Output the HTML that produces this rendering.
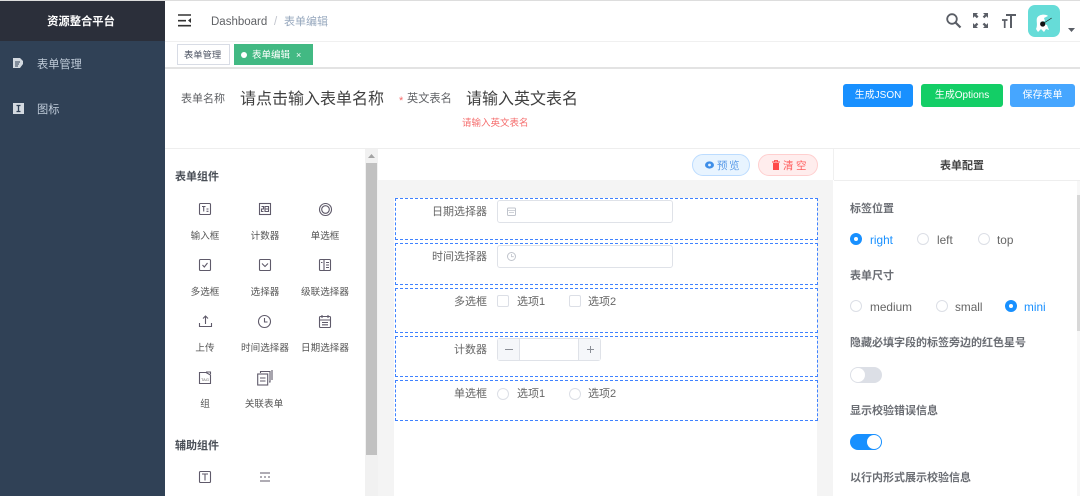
<!DOCTYPE html>
<html lang="zh"><head><meta charset="utf-8"><title>表单编辑</title>
<style>
*{box-sizing:border-box;margin:0;padding:0}
html,body{width:1080px;height:496px;overflow:hidden;background:#fff}
body{position:relative;font-family:"Liberation Sans","Noto Sans CJK SC",sans-serif;color:#606266;filter:blur(.3px)}
.b{position:absolute}
.t{position:absolute;white-space:nowrap;line-height:1.2;margin-top:1px}
.c{transform:translateX(-50%)}
.r{transform:translateX(-100%)}
svg{position:absolute;overflow:visible}
.dash{position:absolute;left:395px;width:423px;border:1px dashed #3f82ff}
.cb{position:absolute;width:12px;height:12px;border:1px solid #dcdfe6;border-radius:2px;background:#fff}
.rd{position:absolute;width:12px;height:12px;border:1px solid #dcdfe6;border-radius:50%;background:#fff}
.rdon{position:absolute;width:12px;height:12px;border-radius:50%;background:#1890ff}
.rdon:after{content:"";position:absolute;left:4px;top:4px;width:4px;height:4px;border-radius:50%;background:#fff}
.btn{position:absolute;top:84px;height:23px;border-radius:3px;color:#fff;font-size:10px;line-height:24px;text-align:center}
.lab{font-size:9.6px;color:#555}
.h{font-size:11px;font-weight:700;color:#4a4f57}
.fl{font-size:11px;color:#666}
.opt{font-size:11px;color:#666}
.cfg{font-size:11px;font-weight:700;color:#6b6e74}
.lat{font-size:11.8px}
.ic{fill:none;stroke:#5f5a6a;stroke-width:1.1}
</style></head><body>

<div class="b" style="left:0;top:0;width:1080px;height:1px;background:#ddd"></div>

<!-- sidebar -->
<div class="b" style="left:0;top:1px;width:165px;height:495px;background:#304156"></div>
<div class="b" style="left:0;top:1px;width:165px;height:40px;background:#2b2f3a"></div>
<div class="t c" style="left:81px;top:15px;font-size:11.3px;font-weight:700;color:#fff">资源整合平台</div>
<svg style="left:13px;top:58px" width="11" height="11" viewBox="0 0 11 11"><path d="M0 0H7L10 3V6L7 10H0Z" fill="#d3d9e0"/><path d="M2 4H7M2 6H6M2 8H5" stroke="#304156" stroke-width="1"/></svg>
<div class="t" style="left:37px;top:58px;font-size:11.2px;color:#bfcbd9">表单管理</div>
<svg style="left:13px;top:103px" width="11" height="11" viewBox="0 0 11 11"><rect width="11" height="11" fill="#d3d9e0"/><path d="M3.5 2.5H7.5M5.5 2.5V8.5M3.5 8.5H7.5" stroke="#304156" stroke-width="1.3" fill="none"/></svg>
<div class="t" style="left:37px;top:103px;font-size:11.2px;color:#bfcbd9">图标</div>

<!-- navbar -->
<div class="b" style="left:165px;top:41px;width:915px;height:1px;background:#f0f0f0"></div>
<svg style="left:178px;top:14px" width="14" height="13" viewBox="0 0 14 13"><path d="M0 1H13M0 6.7H8M0 11.7H13" stroke="#333" stroke-width="1.6" fill="none"/><path d="M13 4L10 6.5L13 9Z" fill="#333"/></svg>
<div class="t" style="left:211px;top:15px;font-size:11.5px;color:#606266">Dashboard</div>
<div class="t" style="left:274px;top:15px;font-size:11.5px;color:#c0c4cc">/</div>
<div class="t" style="left:284px;top:15px;font-size:11px;color:#97a8be">表单编辑</div>
<svg style="left:946px;top:13px" width="15" height="15" viewBox="0 0 15 15"><circle cx="6" cy="6" r="4.8" fill="none" stroke="#5a5e66" stroke-width="1.8"/><path d="M9.5 9.5L14.5 14.5" stroke="#5a5e66" stroke-width="2.2"/></svg>
<svg style="left:973px;top:13px" width="15" height="15" viewBox="0 0 15 15" fill="#5a5e66"><path d="M0 0H5L3.5 1.5L5.5 3.5L3.8 5.2L1.7 3.2L0 5ZM15 0V5L13.4 3.3L11.3 5.3L9.7 3.6L11.7 1.6L10 0ZM0 15V10L1.6 11.7L3.7 9.7L5.3 11.4L3.3 13.4L5 15ZM15 15H10L11.6 13.4L9.6 11.3L11.3 9.7L13.4 11.7L15 10Z"/></svg>
<svg style="left:1001px;top:13px" width="15" height="15" viewBox="0 0 15 15" fill="none" stroke="#5a5e66"><path d="M5 2H15M10 2V15" stroke-width="2"/><path d="M1 7H6.5M3.7 7V15" stroke-width="1.7"/></svg>
<div class="b" style="left:1028px;top:5px;width:32px;height:32px;border-radius:7px;background:#66dcd8"></div>
<svg style="left:1028px;top:5px" width="32" height="32" viewBox="0 0 32 32"><path d="M9 13C11 9 18 9 20 11L16 13L17 16L12 17L19 20L21 25L18 24L16 27L13 24L10 27L8 24C10 20 8 16 9 13Z" fill="#fff"/><circle cx="14.7" cy="19" r="2.6" fill="#111"/><path d="M16 18L23.7 13" stroke="#222" stroke-width=".7"/></svg>
<svg style="left:1068px;top:28px" width="7" height="4" viewBox="0 0 7 4"><path d="M0 0H7L3.5 4Z" fill="#5a5e66"/></svg>

<!-- tags -->
<div class="b" style="left:165px;top:67px;width:915px;height:2px;background:#e3e3e3"></div>
<div class="b" style="left:177px;top:44px;width:53px;height:21px;border:1px solid #d8dce5;background:#fff"></div>
<div class="t" style="left:184px;top:49px;font-size:9.3px;color:#495060">表单管理</div>
<div class="b" style="left:234px;top:44px;width:79px;height:21px;background:#42b983"></div>
<div class="b" style="left:241px;top:52px;width:6px;height:6px;border-radius:50%;background:#fff"></div>
<div class="t" style="left:252px;top:49px;font-size:9.5px;color:#fff">表单编辑</div>
<div class="t" style="left:296px;top:49px;font-size:9px;color:#fff">×</div>

<!-- form header -->
<div class="t" style="left:181px;top:92px;font-size:11px;color:#606266">表单名称</div>
<div class="t" style="left:240px;top:89px;font-size:16px;color:#3f3f3f">请点击输入表单名称</div>
<div class="t" style="left:399px;top:94px;font-size:11px;color:#f56c6c">*</div>
<div class="t" style="left:407px;top:92px;font-size:11.2px;color:#606266">英文表名</div>
<div class="t" style="left:466px;top:89px;font-size:16px;color:#3f3f3f">请输入英文表名</div>
<div class="t" style="left:462px;top:117px;font-size:9.5px;color:#f56c6c">请输入英文表名</div>
<div class="btn" style="left:843px;width:70px;background:#1890ff">生成JSON</div>
<div class="btn" style="left:921px;width:82px;background:#13ce66">生成Options</div>
<div class="btn" style="left:1010px;width:65px;background:#46a6ff">保存表单</div>
<div class="b" style="left:165px;top:148px;width:915px;height:1px;background:#eee"></div>

<!-- left panel -->
<div class="b" style="left:365px;top:149px;width:13px;height:347px;background:#f1f1f1"></div>
<div class="b" style="left:366px;top:163px;width:11px;height:292px;background:#c1c1c1"></div>
<svg style="left:368px;top:154px" width="7" height="4" viewBox="0 0 7 4"><path d="M0 4H7L3.5 0Z" fill="#a3a3a3"/></svg>
<div class="t h" style="left:175px;top:170px">表单组件</div>

<svg style="left:199px;top:203px" width="12" height="12" viewBox="0 0 12 12"><rect x=".5" y=".5" width="11" height="11" rx="1" class="ic"/><path d="M3 3.5H6.5M4.7 3.5V8.5M7.5 6H9.5M7.5 8.3H9.5" class="ic" stroke-width=".9"/></svg>
<div class="t c lab" style="left:205px;top:230px">输入框</div>
<svg style="left:259px;top:203px" width="12" height="12" viewBox="0 0 12 12"><rect x=".5" y=".5" width="11" height="11" class="ic"/><path d="M2.5 3.5H4.5V6H2.5V8.5H4.5M6 3.5H9.5V8.5H6ZM6 6H9.5" class="ic" stroke="#6b5f3f" stroke-width=".9"/></svg>
<div class="t c lab" style="left:265px;top:230px">计数器</div>
<svg style="left:319px;top:203px" width="13" height="13" viewBox="0 0 13 13"><circle cx="6.5" cy="6.5" r="6" class="ic"/><circle cx="6.5" cy="6.5" r="3.8" class="ic"/></svg>
<div class="t c lab" style="left:325px;top:230px">单选框</div>

<svg style="left:199px;top:259px" width="12" height="12" viewBox="0 0 12 12"><rect x=".5" y=".5" width="11" height="11" rx="1" class="ic"/><path d="M3.5 6L5.3 8L8.5 4" class="ic"/></svg>
<div class="t c lab" style="left:205px;top:286px">多选框</div>
<svg style="left:259px;top:259px" width="12" height="12" viewBox="0 0 12 12"><rect x=".5" y=".5" width="11" height="11" rx="1" class="ic"/><path d="M3 4.5L6 7.5L9 4.5" class="ic"/></svg>
<div class="t c lab" style="left:265px;top:286px">选择器</div>
<svg style="left:319px;top:259px" width="12" height="12" viewBox="0 0 12 12"><rect x=".5" y=".5" width="11" height="11" rx="1" class="ic"/><path d="M5 .5V11.5M7 3.5H10M7 6H10M7 8.5H10M2 3.5H3.5" class="ic"/></svg>
<div class="t c lab" style="left:325px;top:286px">级联选择器</div>

<svg style="left:199px;top:315px" width="13" height="13" viewBox="0 0 13 13"><path d="M6.5 9V1M4 3.5L6.5 1L9 3.5M.5 8V11.5H12.5V8" class="ic"/></svg>
<div class="t c lab" style="left:205px;top:342px">上传</div>
<svg style="left:258px;top:315px" width="13" height="13" viewBox="0 0 13 13"><circle cx="6.5" cy="6.5" r="6" class="ic"/><path d="M6.5 3V7H9.5" class="ic"/></svg>
<div class="t c lab" style="left:265px;top:342px">时间选择器</div>
<svg style="left:319px;top:315px" width="12" height="13" viewBox="0 0 12 13"><rect x=".5" y="1.5" width="11" height="11" rx="1" class="ic"/><path d="M.5 5H11.5M3 0V3M9 0V3M3 7.5H9M3 9.8H9" class="ic" stroke-width=".9"/></svg>
<div class="t c lab" style="left:325px;top:342px">日期选择器</div>

<svg style="left:199px;top:371px" width="12" height="13" viewBox="0 0 12 13"><path d="M.5 1.5H7L11.5 4V12.5H.5Z" class="ic" stroke="#8d97a3"/><path d="M7 1H11.5V3" class="ic" stroke="#8d97a3"/></svg>
<div class="t" style="left:201px;top:377px;font-size:4px;color:#666">TAG</div>
<div class="t c lab" style="left:205px;top:398px">组</div>
<svg style="left:257px;top:370px" width="16" height="16" viewBox="0 0 16 16"><rect x=".7" y="4" width="10" height="11" class="ic" stroke="#333" stroke-width="1.3"/><path d="M3 8H8.5M3 11H8.5" class="ic" stroke="#333"/><path d="M3.5 3V1.5H13V12H12M15 0V10" class="ic" stroke="#333"/></svg>
<div class="t c lab" style="left:264px;top:398px">关联表单</div>

<div class="t h" style="left:175px;top:439px">辅助组件</div>
<svg style="left:199px;top:471px" width="12" height="12" viewBox="0 0 12 12"><rect x=".5" y=".5" width="11" height="11" rx="1" class="ic"/><path d="M3 3H9M6 3V9.5" class="ic" stroke="#333"/></svg>
<svg style="left:259px;top:471px" width="12" height="12" viewBox="0 0 12 12"><path d="M1 2H11M1 6H3M5 6H7M9 6H11M1 10H11" class="ic" stroke="#6a6a6a"/></svg>

<!-- center -->
<div class="b" style="left:378px;top:180px;width:455px;height:316px;background:#f4f4f4"></div>
<div class="b" style="left:394px;top:180px;width:423px;height:316px;background:#fff"></div>
<div class="b" style="left:394px;top:180px;width:423px;height:18px;background:#f4f4f4"></div>
<div class="b" style="left:692px;top:154px;width:58px;height:22px;border:1px solid #bcdcff;border-radius:11px;background:#e8f4ff"></div>
<svg style="left:705px;top:161px" width="9" height="8" viewBox="0 0 9 8"><ellipse cx="4.5" cy="4" rx="4.5" ry="3.6" fill="#3e8ee8"/><circle cx="4.5" cy="4" r="1.4" fill="#e8f4ff"/></svg>
<div class="t" style="left:717px;top:159px;font-size:10.5px;letter-spacing:1.5px;color:#5b9be8">预览</div>
<div class="b" style="left:758px;top:154px;width:60px;height:22px;border:1px solid #ffcfcf;border-radius:11px;background:#ffeded"></div>
<svg style="left:772px;top:160px" width="8" height="10" viewBox="0 0 8 10"><path d="M0 2H8M2.5 2V.6H5.5V2" stroke="#ff4949" fill="none"/><path d="M1 3H7V10H1Z" fill="#ff4949"/></svg>
<div class="t" style="left:783px;top:159px;font-size:10.5px;letter-spacing:2.5px;color:#ff6060">清空</div>

<div class="dash" style="top:198px;height:42px"></div>
<div class="dash" style="top:243px;height:42px"></div>
<div class="dash" style="top:288px;height:45px"></div>
<div class="dash" style="top:336px;height:41px"></div>
<div class="dash" style="top:380px;height:41px"></div>

<div class="t r fl" style="left:487px;top:205px">日期选择器</div>
<div class="b" style="left:497px;top:200px;width:176px;height:23px;border:1px solid #dfe2e8;border-radius:3px;background:#fff"></div>
<svg style="left:507px;top:207px" width="9" height="9" viewBox="0 0 9 9"><rect x=".5" y="1" width="8" height="7.5" rx="1" fill="none" stroke="#c0c4cc"/><path d="M.5 3.5H8.5M2 5.5H7" stroke="#c0c4cc" stroke-width=".8"/></svg>
<div class="t r fl" style="left:487px;top:250px">时间选择器</div>
<div class="b" style="left:497px;top:245px;width:176px;height:23px;border:1px solid #dfe2e8;border-radius:3px;background:#fff"></div>
<svg style="left:507px;top:252px" width="9" height="9" viewBox="0 0 9 9"><circle cx="4.5" cy="4.5" r="4" fill="none" stroke="#c0c4cc"/><path d="M4.5 2V4.7H6.8" fill="none" stroke="#c0c4cc" stroke-width=".8"/></svg>

<div class="t r fl" style="left:487px;top:295px">多选框</div>
<div class="cb" style="left:497px;top:295px"></div>
<div class="t opt" style="left:517px;top:295px">选项1</div>
<div class="cb" style="left:569px;top:295px"></div>
<div class="t opt" style="left:588px;top:295px">选项2</div>

<div class="t r fl" style="left:487px;top:343px">计数器</div>
<div class="b" style="left:497px;top:338px;width:104px;height:23px;border:1px solid #dfe2e8;border-radius:3px;background:#fff"></div>
<div class="b" style="left:498px;top:339px;width:22px;height:21px;background:#f5f7fa;border-right:1px solid #dfe2e8"></div>
<div class="b" style="left:578px;top:339px;width:22px;height:21px;background:#f5f7fa;border-left:1px solid #dfe2e8"></div>
<svg style="left:505px;top:345px" width="8" height="9" viewBox="0 0 8 9"><path d="M0 4.5H8" stroke="#8a8e96"/></svg>
<svg style="left:586px;top:345px" width="9" height="9" viewBox="0 0 9 9"><path d="M1 4.5H8M4.5 1V8" stroke="#8a8e96"/></svg>

<div class="t r fl" style="left:487px;top:387px">单选框</div>
<div class="rd" style="left:497px;top:388px"></div>
<div class="t opt" style="left:517px;top:387px">选项1</div>
<div class="rd" style="left:569px;top:388px"></div>
<div class="t opt" style="left:588px;top:387px">选项2</div>

<!-- right panel -->
<div class="b" style="left:833px;top:149px;width:1px;height:31px;background:#f0f0f0"></div>
<div class="b" style="left:834px;top:180px;width:246px;height:1px;background:#eee"></div>
<div class="t c" style="left:962px;top:159px;font-size:11px;font-weight:700;color:#444">表单配置</div>
<div class="b" style="left:1077px;top:181px;width:3px;height:315px;background:#f7f7f7"></div>
<div class="b" style="left:1077px;top:195px;width:3px;height:136px;background:#d8d8d8"></div>

<div class="t cfg" style="left:850px;top:202px">标签位置</div>
<div class="rdon" style="left:850px;top:233px"></div>
<div class="t lat" style="left:870px;top:232px;color:#1890ff">right</div>
<div class="rd" style="left:917px;top:233px"></div>
<div class="t lat" style="left:937px;top:232px;color:#666">left</div>
<div class="rd" style="left:978px;top:233px"></div>
<div class="t lat" style="left:997px;top:232px;color:#666">top</div>

<div class="t cfg" style="left:850px;top:269px">表单尺寸</div>
<div class="rd" style="left:850px;top:300px"></div>
<div class="t lat" style="left:870px;top:299px;color:#666">medium</div>
<div class="rd" style="left:936px;top:300px"></div>
<div class="t lat" style="left:955px;top:299px;color:#666">small</div>
<div class="rdon" style="left:1005px;top:300px"></div>
<div class="t lat" style="left:1024px;top:299px;color:#1890ff">mini</div>

<div class="t cfg" style="left:850px;top:336px">隐藏必填字段的标签旁边的红色星号</div>
<div class="b" style="left:850px;top:367px;width:32px;height:16px;border-radius:8px;background:#dcdfe6"></div>
<div class="b" style="left:851px;top:368px;width:14px;height:14px;border-radius:50%;background:#fff"></div>
<div class="t cfg" style="left:850px;top:404px">显示校验错误信息</div>
<div class="b" style="left:850px;top:434px;width:32px;height:16px;border-radius:8px;background:#1890ff"></div>
<div class="b" style="left:867px;top:435px;width:14px;height:14px;border-radius:50%;background:#fff"></div>
<div class="t cfg" style="left:850px;top:471px">以行内形式展示校验信息</div>

</body></html>
